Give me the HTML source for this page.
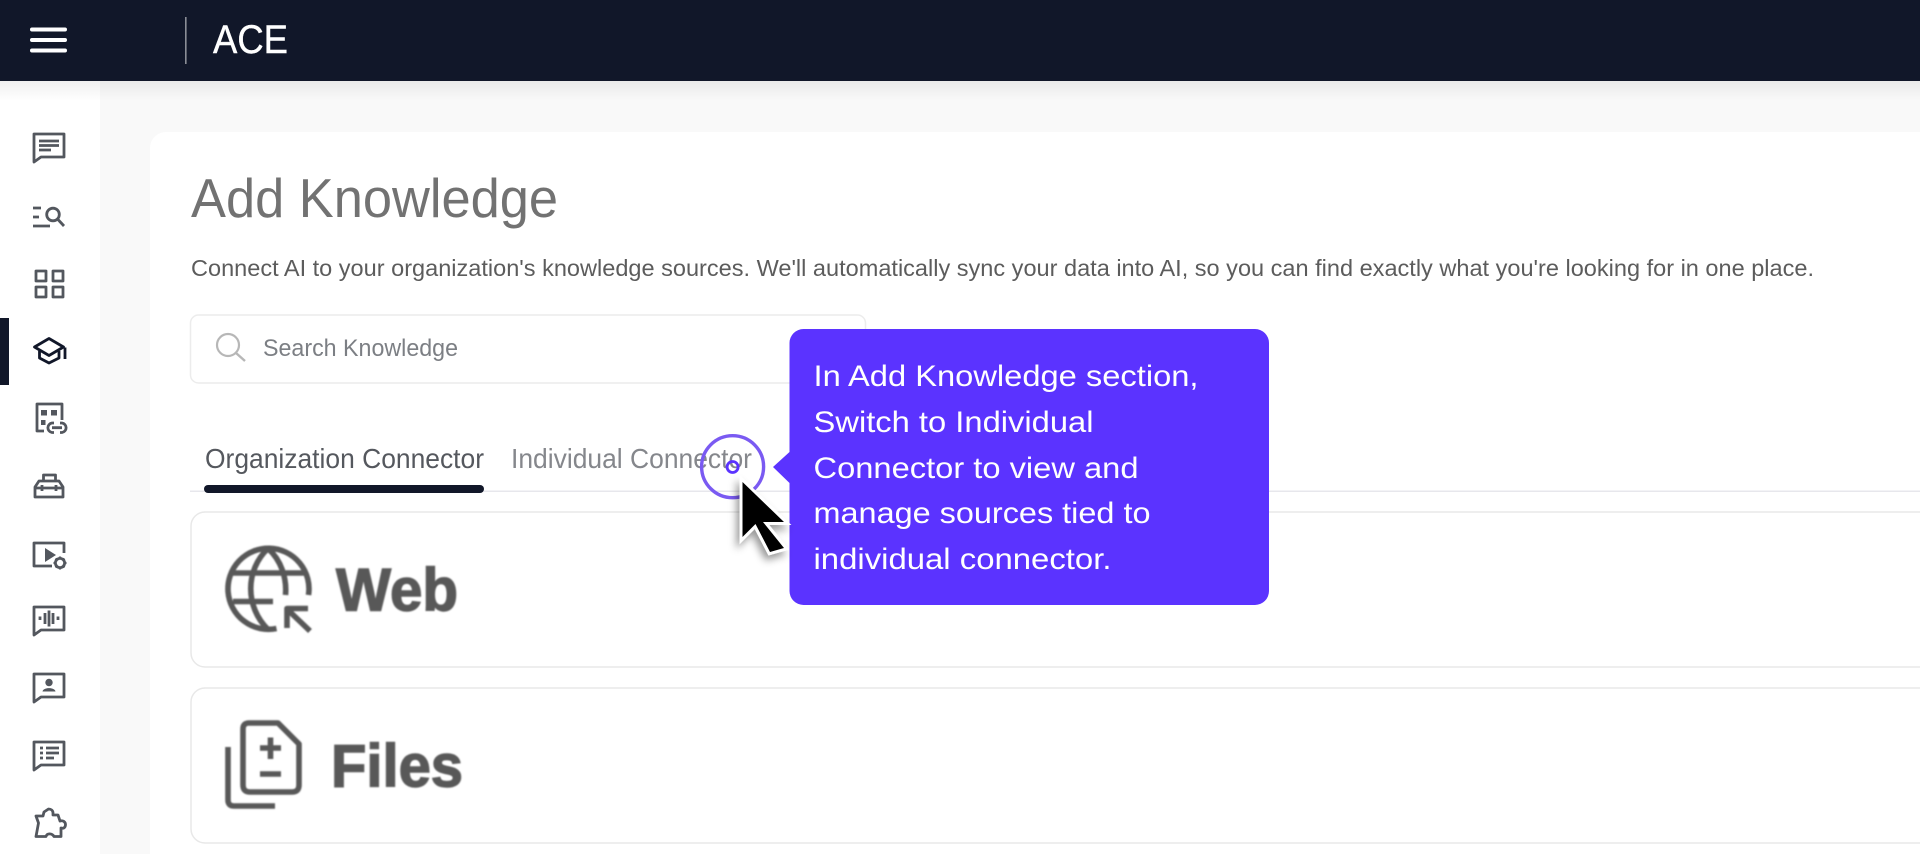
<!DOCTYPE html>
<html lang="en">
<head>
<meta charset="utf-8">
<title>Add Knowledge</title>
<style>
html,body{margin:0;padding:0;width:1920px;height:854px;overflow:hidden;background:#fff}
svg{display:block;position:absolute;left:0;top:0}
text{font-family:"Liberation Sans",Arial,sans-serif}
.ic{fill:none;stroke:#53575e;stroke-width:2.8;stroke-linecap:butt;stroke-linejoin:round}
.big{fill:none;stroke:#595959;stroke-width:5.6;stroke-linejoin:round}
</style>
</head>
<body>
<svg width="1920" height="854" viewBox="0 0 1920 854" xmlns="http://www.w3.org/2000/svg">
<defs>
<linearGradient id="hs" x1="0" y1="0" x2="0" y2="1">
<stop offset="0" stop-color="#000" stop-opacity=".06"/>
<stop offset="1" stop-color="#000" stop-opacity="0"/>
</linearGradient>
<filter id="bl" x="-5%" y="-5%" width="110%" height="110%"><feGaussianBlur stdDeviation=".7"/></filter>
<filter id="cs" x="-40%" y="-40%" width="180%" height="180%"><feDropShadow dx="-3" dy="5" stdDeviation="4" flood-color="#000" flood-opacity=".4"/></filter>
</defs>

<!-- backgrounds -->
<rect x="0" y="0" width="1920" height="854" fill="#fff"/>
<rect x="100" y="81" width="1820" height="773" fill="#f9f9f9"/>
<rect x="150" y="132" width="1800" height="760" rx="16" fill="#fff"/>
<rect x="0" y="81" width="1920" height="20" fill="url(#hs)"/>

<!-- header -->
<rect x="0" y="0" width="1920" height="81" fill="#111729"/>
<g stroke="#fff" stroke-width="4" stroke-linecap="round">
<path d="M32 29.500H65M32 40H65M32 50.500H65"/>
</g>
<rect x="185" y="17" width="1.600" height="47" fill="#8a8d96"/>
<text x="213" y="53" font-size="40" fill="#fff" stroke="#fff" stroke-width=".4" textLength="75" lengthAdjust="spacingAndGlyphs">ACE</text>

<!-- sidebar icons -->
<path class="ic" d="M34 134H64V157H41L34 162Z"/>
<path class="ic" d="M39 141H59M39 145.500H59M39 150H51" stroke-width="2.200"/>

<path class="ic" d="M33 208H41M33 217H39M33 226H50"/>
<circle class="ic" cx="53" cy="214.500" r="6.300"/>
<path class="ic" d="M57.500 219L64 226" stroke-width="3"/>

<g class="ic"><rect x="36" y="271" width="10" height="10"/><rect x="53" y="271" width="10" height="10"/><rect x="36" y="287" width="10" height="10"/><rect x="53" y="287" width="10" height="10"/></g>

<rect x="0" y="318" width="9" height="67" fill="#111729"/>
<g fill="none" stroke="#111729" stroke-width="2.800" stroke-linejoin="round">
<path d="M34.500 347L49 338.500L63.500 347L49 355.500Z"/>
<path d="M39.500 351V358L49 363L59 358V351"/>
<path d="M65 347.500V359"/>
</g>

<path class="ic" d="M44 431H37V404H62V420"/>
<g fill="#53575e"><rect x="41" y="410" width="6" height="5.500"/><rect x="51" y="410" width="6" height="5.500"/><rect x="41" y="420" width="4.500" height="5"/></g>
<path class="ic" d="M54 423H52A4.800 4.800 0 0 0 52 432.500H54M60 423H62A4.800 4.800 0 0 1 62 432.500H60M52 427.700H62"/>

<path class="ic" d="M35 497V487L39 481H59L63 487V497ZM35 488H63M43.500 481V475H55.500V481"/>
<path class="ic" d="M42 485V491M56 485V491" stroke-width="2.200"/>

<path class="ic" d="M52 566H34V543H64V553"/>
<path d="M45 548L56 555L45 562Z" fill="#53575e"/>
<circle cx="60" cy="563" r="4.600" fill="none" stroke="#53575e" stroke-width="2.800"/>
<path d="M60 556.500V559M60 567V569.500M53.500 563H56M64 563H66.500M55.500 558.500L57 560M63 566L64.500 567.500M55.500 567.500L57 566M63 560L64.500 558.500" stroke="#53575e" stroke-width="2.200"/>

<path class="ic" d="M34 607H64V630H41L34 635Z"/>
<path class="ic" d="M40 616.500V620M45 613V624M49 610.500V626.500M53 613V624M58 616.500V620" stroke-width="2"/>

<path class="ic" d="M34 674H64V697H41L34 702Z"/>
<circle cx="49" cy="682.500" r="3.700" fill="#53575e"/>
<path d="M42.500 691.500C43 687 55 687 55.500 691.500Z" fill="#53575e"/>

<path class="ic" d="M34 742H64V765H41L34 770Z"/>
<path class="ic" d="M40 748H43M46 748H59M40 753H43M46 753H59M40 758H43M46 758H54" stroke-width="2.200"/>

<path class="ic" d="M43 816H36L38.500 823L36 836.500H46C47 833 52 833 54 836.500H61V828C64 829 65.500 827 65.500 824.500C65.500 822 63 820 60 821L58 815H53L53 813C53 810.500 51 809 48.500 809L44 812Z" stroke-width="2.800"/>

<!-- title -->
<text x="191" y="217" font-size="55" fill="#727272" textLength="367" lengthAdjust="spacingAndGlyphs">Add Knowledge</text>
<text x="191" y="276" font-size="23" fill="#5c5c5c" textLength="1623" lengthAdjust="spacingAndGlyphs">Connect AI to your organization's knowledge sources. We'll automatically sync your data into AI, so you can find exactly what you're looking for in one place.</text>

<!-- search -->
<rect x="190.500" y="315" width="675" height="68" rx="8" fill="#fff" stroke="#ececec" stroke-width="1.500"/>
<circle cx="228" cy="345" r="11" fill="none" stroke="#b7b7b7" stroke-width="2.200"/>
<path d="M236 353L245 361" stroke="#b7b7b7" stroke-width="2.400"/>
<text x="263" y="356" font-size="24" fill="#7c7f84" textLength="195" lengthAdjust="spacingAndGlyphs">Search Knowledge</text>

<!-- tabs -->
<rect x="190" y="490.500" width="1730" height="1.500" fill="#e7e7ec"/>
<text x="205" y="468" font-size="28" fill="#55585e" textLength="279" lengthAdjust="spacingAndGlyphs">Organization Connector</text>
<rect x="204" y="485" width="280" height="8" rx="4" fill="#111729"/>
<text x="511" y="468" font-size="28" fill="#85878c" textLength="241" lengthAdjust="spacingAndGlyphs">Individual Connector</text>

<!-- cards -->
<rect x="191" y="512" width="1800" height="155" rx="14" fill="#fff" stroke="#e8e8e8" stroke-width="1.500"/>
<rect x="191" y="688" width="1800" height="155" rx="14" fill="#fff" stroke="#e8e8e8" stroke-width="1.500"/>

<g filter="url(#bl)">
<!-- web icon -->
<path class="big" d="M276.500 628.500A40.500 40.500 0 1 1 308.500 595M233 573H304M233 601.500H273M268 548.500C245 570 245 607 268 629.500M268 548.500C281 560 287 578 285.500 595"/>
<path class="big" d="M308 608.500H287V628M288 610L310 631" stroke-width="6"/>
<text x="336" y="610.500" font-size="60" font-weight="700" fill="#595959" stroke="#595959" stroke-width="1.400" textLength="122" lengthAdjust="spacingAndGlyphs">Web</text>
<!-- files icon -->
<path class="big" d="M249 723H278L299 744V785Q299 792 292 792H250Q243 792 243 785V729Q243 723 249 723Z"/>
<path class="big" d="M260 748H281M270.500 737.500V759M260 774H281"/>
<path class="big" d="M228 747V800Q228 806 234 806H275"/>
<text x="331" y="786.500" font-size="60" font-weight="700" fill="#595959" stroke="#595959" stroke-width="1.400" textLength="132" lengthAdjust="spacingAndGlyphs">Files</text>
</g>

<!-- hotspot -->
<circle cx="732.600" cy="466.700" r="31" fill="none" stroke="#7a5af2" stroke-width="3.400"/>
<circle cx="732.600" cy="467" r="5.500" fill="none" stroke="#5b33ff" stroke-width="2.800"/>

<!-- tooltip -->
<path d="M803.500 329H1255A14 14 0 0 1 1269 343V591A14 14 0 0 1 1255 605H803.500A14 14 0 0 1 789.500 591V483L773 467L789.500 452V343A14 14 0 0 1 803.500 329Z" fill="#5b33ff"/>
<g fill="#fff" font-size="30">
<text x="813.500" y="386" textLength="385" lengthAdjust="spacingAndGlyphs">In Add Knowledge section,</text>
<text x="813.500" y="432" textLength="280" lengthAdjust="spacingAndGlyphs">Switch to Individual</text>
<text x="813.500" y="478" textLength="325" lengthAdjust="spacingAndGlyphs">Connector to view and</text>
<text x="813.500" y="523" textLength="337" lengthAdjust="spacingAndGlyphs">manage sources tied to</text>
<text x="813.500" y="569" textLength="298" lengthAdjust="spacingAndGlyphs">individual connector.</text>
</g>

<!-- cursor -->
<path d="M742.500 482L784 522L763 522L784 548L770 552L755.500 524L742.500 537Z" fill="#000" stroke="#fff" stroke-width="6" stroke-linejoin="miter" stroke-miterlimit="6" paint-order="stroke" filter="url(#cs)"/>
</svg>
</body>
</html>
